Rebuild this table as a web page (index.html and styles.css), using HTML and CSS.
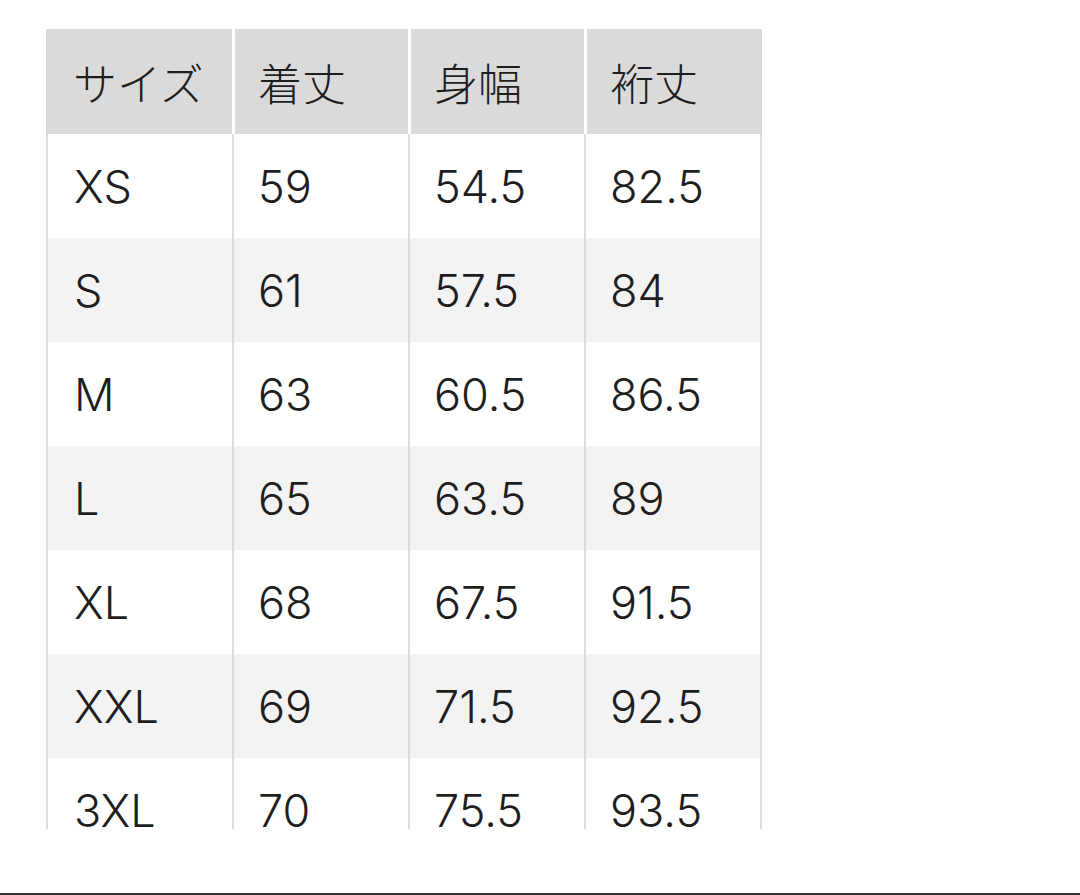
FILE: index.html
```html
<!DOCTYPE html>
<html lang="ja">
<head>
<meta charset="utf-8">
<title>サイズ表</title>
<link rel="stylesheet" href="styles.css">
</head>
<body>
<div class="page">
  <div class="clip">
    <table class="sizes">
      <colgroup>
        <col class="c1"><col class="c2"><col class="c3"><col class="c4">
      </colgroup>
      <thead>
        <tr><th>サイズ</th><th>着丈</th><th>身幅</th><th>裄丈</th></tr>
      </thead>
      <tbody>
        <tr><td>XS</td><td>59</td><td>54.5</td><td>82.5</td></tr>
        <tr><td>S</td><td>61</td><td>57.5</td><td>84</td></tr>
        <tr><td>M</td><td>63</td><td>60.5</td><td>86.5</td></tr>
        <tr><td>L</td><td>65</td><td>63.5</td><td>89</td></tr>
        <tr><td>XL</td><td>68</td><td>67.5</td><td>91.5</td></tr>
        <tr><td>XXL</td><td>69</td><td>71.5</td><td>92.5</td></tr>
        <tr><td>3XL</td><td>70</td><td>75.5</td><td>93.5</td></tr>
      </tbody>
    </table>
  </div>
  <div class="spacer"></div>
  <div class="rule"></div>
</div>
</body>
</html>
```

FILE: styles.css
```css
html, body {
  margin: 0;
  padding: 0;
  background: #ffffff;
}
.page {
  width: 1080px;
  height: 895px;
  display: flex;
  flex-direction: column;
  overflow: hidden;
}
.clip {
  margin: 29px 0 0 46px;
  width: 720px;
  height: 800px;
  overflow: hidden;
  flex: none;
}
.spacer {
  flex: 1;
}
.rule {
  height: 2px;
  background: #333333;
  flex: none;
}
.sizes {
  border-collapse: separate;
  border-spacing: 0;
  font-family: "Inter", "Liberation Sans", "Noto Sans CJK JP", sans-serif;
  font-weight: 300;
  font-size: 45px;
  color: #1e1e1e;
  table-layout: fixed;
  width: 716px;
}
.c1 { width: 186px; }
.c2 { width: 176px; }
.c3 { width: 176px; }
.c4 { width: 178px; }
.sizes th,
.sizes td {
  box-sizing: border-box;
  text-align: left;
  padding: 0 0 0 24px;
  vertical-align: middle;
  white-space: nowrap;
  overflow: hidden;
}
.sizes th {
  height: 105px;
  background: #dadada;
  border-left: 3px solid #ffffff;
  font-family: "Noto Sans CJK JP", sans-serif;
  font-weight: 300;
  font-size: 44px;
  line-height: 1;
  padding-left: 23px;
}
.sizes th:first-child {
  border-left: 0;
  padding-left: 27px;
}
.sizes td {
  height: 104px;
  border-left: 2px solid #dcdcdc;
}
.sizes td:first-child {
  padding-left: 26px;
}
.sizes td:last-child {
  border-right: 2px solid #dcdcdc;
}
.sizes tbody tr:nth-child(even) td {
  background: #f3f3f3;
}
```
